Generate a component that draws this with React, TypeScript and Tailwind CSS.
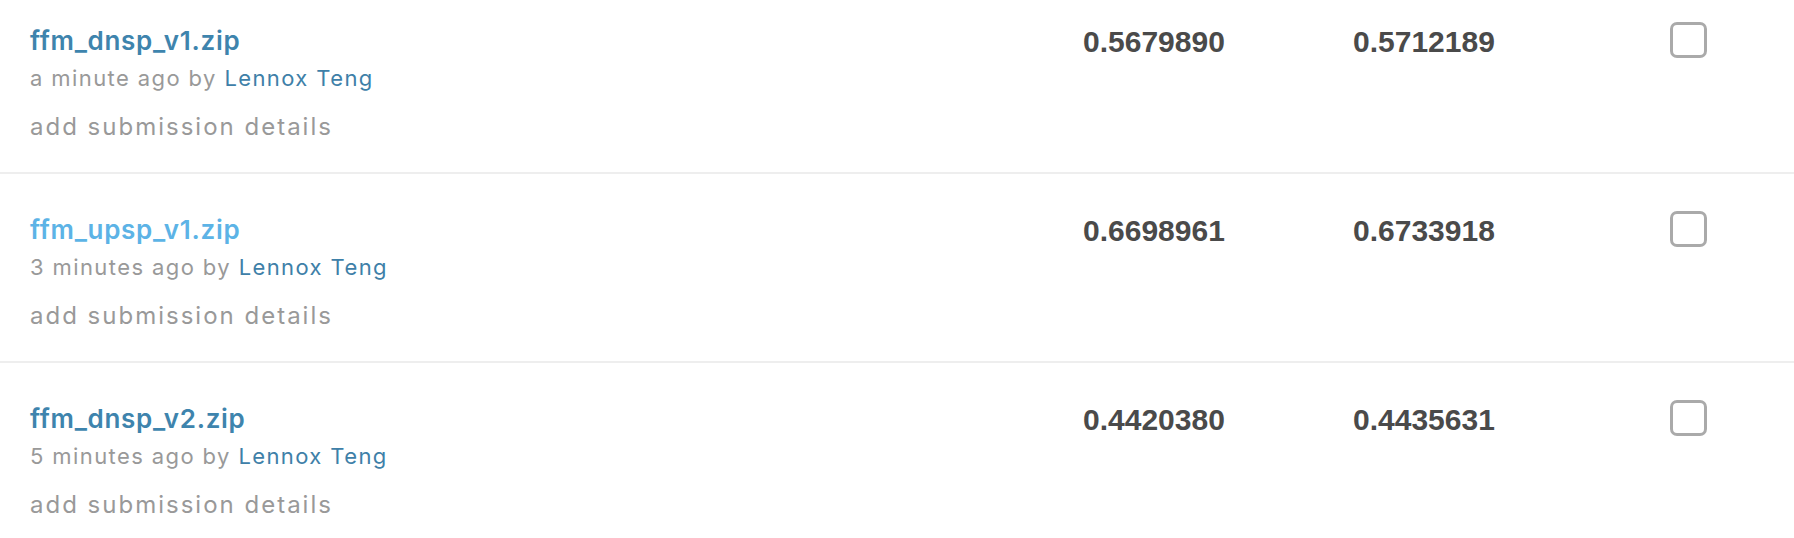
import React from "react";

type Row = {
  name: string;
  time: string;
  a: string;
  b: string;
  hover?: boolean;
};

const rows: Row[] = [
  { name: "ffm_dnsp_v1.zip", time: "a minute ago by", a: "0.5679890", b: "0.5712189" },
  { name: "ffm_upsp_v1.zip", time: "3 minutes ago by", a: "0.6698961", b: "0.6733918", hover: true },
  { name: "ffm_dnsp_v2.zip", time: "5 minutes ago by", a: "0.4420380", b: "0.4435631" },
];

export default function App() {
  return (
    <div className="w-[1794px] h-[538px] overflow-hidden bg-white">
      <div className="mt-[-15px]">
        {rows.map((r, i) => (
          <div key={i} className="flex border-b-2 border-[#eeeeee]">
            <div className="w-[1083px] pl-[30px] pt-[40px] pb-[29px] font-['Inter','Liberation_Sans',sans-serif]">
              <div
                className={`h-[32px] leading-[32px] text-[26px] font-semibold tracking-[0.7px] ${
                  r.hover ? "text-[#5cb3e6]" : "text-[#3e84ad]"
                }`}
              >
                {r.name}
              </div>
              <div className="mt-[6px] h-[30px] leading-[30px] text-[22px] tracking-[1.4px] text-[#999999]">
                {r.time} <span className="text-[#3e80a8]">Lennox Teng</span>
              </div>
              <div className="mt-[18px] h-[32px] leading-[32px] text-[24px] tracking-[2px] text-[#999999]">
                add submission details
              </div>
            </div>
            <div className="w-[270px] pt-[40px] h-[34px] leading-[34px] text-[30px] font-bold text-[#4a4a4a] font-['Liberation_Sans',Arial,sans-serif] box-content">
              {r.a}
            </div>
            <div className="w-[315px] pt-[40px] h-[34px] leading-[34px] text-[30px] font-bold text-[#4a4a4a] font-['Liberation_Sans',Arial,sans-serif] box-content">
              {r.b}
            </div>
            <div className="pt-[37px] pl-[2px]">
              <div className="w-[37px] h-[36px] rounded-[7px] border-[3px] border-[#aaaaaa] bg-white" />
            </div>
          </div>
        ))}
      </div>
    </div>
  );
}
